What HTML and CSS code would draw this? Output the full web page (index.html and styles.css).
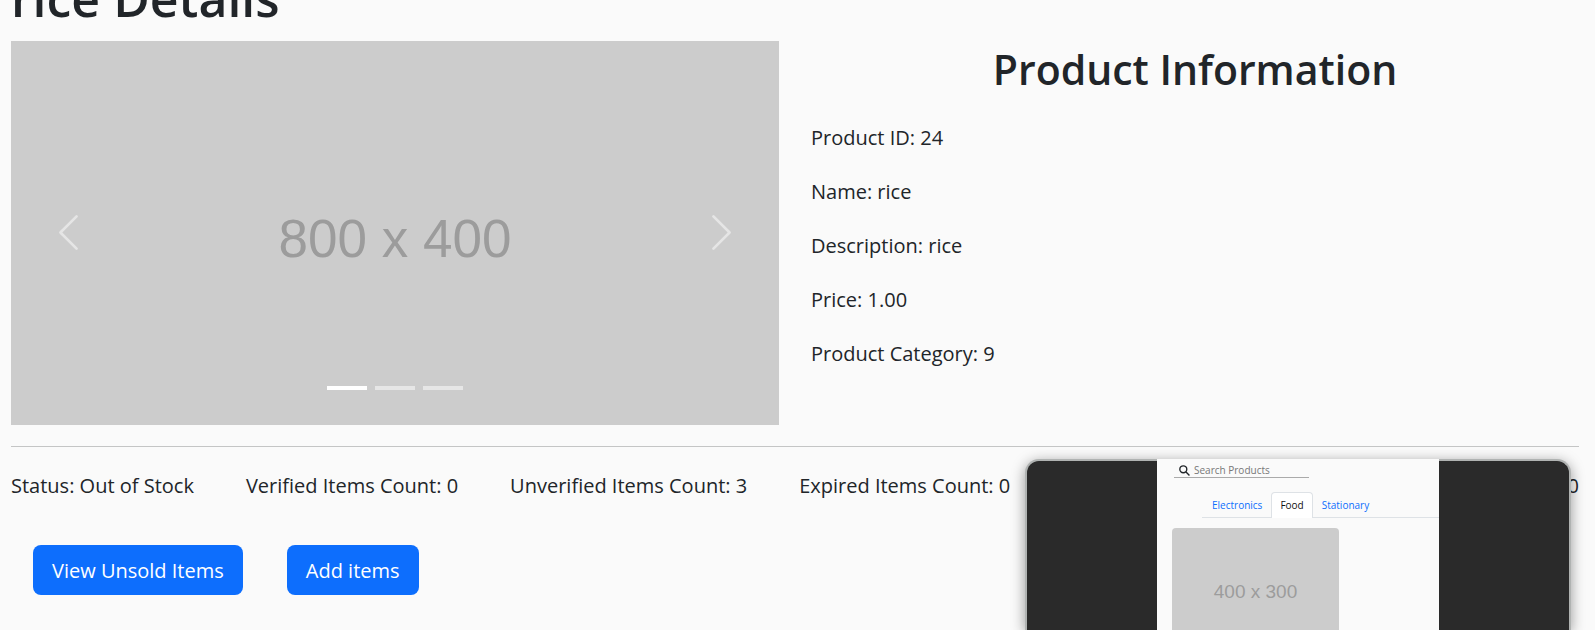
FILE: index.html
```html
<!DOCTYPE html>
<html lang="en">
<head>
<meta charset="utf-8">
<title>rice Details</title>
<link rel="stylesheet" href="styles.css">
</head>
<body>
<main class="page">
  <h1 class="page-title">rice Details</h1>
  <div class="product">
    <section class="carousel" aria-label="Product pictures">
      <span class="placeholder">800 x 400</span>
      <button class="control control-prev" type="button" aria-label="Previous">
        <svg class="chevron" viewBox="0 0 16 16"><path d="M11.354 1.646a.5.5 0 0 1 0 .708L5.707 8l5.647 5.646a.5.5 0 0 1-.708.708l-6-6a.5.5 0 0 1 0-.708l6-6a.5.5 0 0 1 .708 0z"/></svg>
      </button>
      <button class="control control-next" type="button" aria-label="Next">
        <svg class="chevron" viewBox="0 0 16 16"><path d="M4.646 1.646a.5.5 0 0 1 .708 0l6 6a.5.5 0 0 1 0 .708l-6 6a.5.5 0 0 1-.708-.708L10.293 8 4.646 2.354a.5.5 0 0 1 0-.708z"/></svg>
      </button>
      <div class="indicators">
        <button class="indicator active" type="button" aria-label="Slide 1"></button>
        <button class="indicator" type="button" aria-label="Slide 2"></button>
        <button class="indicator" type="button" aria-label="Slide 3"></button>
      </div>
    </section>
    <section class="info">
      <h2 class="info-title">Product Information</h2>
      <p class="info-line">Product ID: 24</p>
      <p class="info-line">Name: rice</p>
      <p class="info-line">Description: rice</p>
      <p class="info-line">Price: 1.00</p>
      <p class="info-line">Product Category: 9</p>
    </section>
  </div>
  <hr class="divider">
  <div class="counts">
    <span>Status: Out of Stock</span>
    <span>Verified Items Count: 0</span>
    <span>Unverified Items Count: 3</span>
    <span>Expired Items Count: 0</span>
    <span class="count-last">0</span>
  </div>
  <div class="actions">
    <button class="btn" type="button">View Unsold Items</button>
    <button class="btn" type="button">Add items</button>
  </div>
</main>
<aside class="preview">
  <div class="screen">
    <label class="search">
      <svg class="search-icon" viewBox="0 0 12 12"><circle cx="4.7" cy="4.7" r="3.8"/><path d="M7.4 7.4 11.4 11.4"/></svg>
      <input class="search-input" type="text" placeholder="Search Products" aria-label="Search Products">
    </label>
    <nav class="tabs">
      <a class="tab" href="#electronics">Electronics</a>
      <a class="tab tab-active" href="#food">Food</a>
      <a class="tab" href="#stationary">Stationary</a>
    </nav>
    <div class="thumb">400 x 300</div>
  </div>
</aside>
</body>
</html>
```

FILE: styles.css
```css
* { box-sizing: border-box; }

body {
  margin: 0;
  min-height: 100vh;
  position: relative;
  overflow: hidden;
  background: #fafafa;
  color: #212529;
  font-family: "Segoe UI", "Open Sans", sans-serif;
  font-size: 20px;
  line-height: 32px;
}

.page { padding: 0 16px 0 11px; }

/* The view is scrolled past the top of the title. */
.page-title {
  margin: -34px 0 11px;
  font-size: 50px;
  line-height: 64px;
  font-weight: 600;
}

.product {
  display: grid;
  grid-template-columns: 1fr 1fr;
  gap: 32px;
}

.carousel {
  position: relative;
  aspect-ratio: 2 / 1;
  display: flex;
  align-items: center;
  justify-content: center;
  background: #ccc;
}

.placeholder {
  padding-top: 12px;
  color: #9c9c9c;
  font-family: "Liberation Sans", Arial, sans-serif;
  font-size: 53px;
  line-height: 64px;
}

.control {
  position: absolute;
  top: 0;
  bottom: 2px;
  width: 15%;
  padding: 0;
  border: 0;
  background: none;
  display: flex;
  align-items: center;
  justify-content: center;
  opacity: .5;
}
.control-prev { left: 0; }
.control-next { right: 0; }
.chevron { width: 43px; height: 43px; fill: #fff; }

.indicators {
  position: absolute;
  inset: auto 0 35px;
  display: flex;
  justify-content: center;
  gap: 8px;
}
.indicator {
  width: 40px;
  height: 4px;
  padding: 0;
  border: 0;
  background: #fff;
  opacity: .5;
}
.indicator.active { opacity: 1; }

.info-title {
  margin: 0 0 27px;
  padding-top: 2px;
  text-align: center;
  font-size: 41px;
  line-height: 52px;
  font-weight: 600;
}
.info-line { margin: 0 0 22px; }

.divider {
  margin: 21px 0 23px;
  border: 0;
  border-top: 1px solid #c4c5c5;
}

.counts {
  display: flex;
  gap: 52px;
  white-space: nowrap;
}
.count-last { margin-left: auto; }

.actions {
  display: flex;
  gap: 44px;
  padding: 43px 22px 0;
}
.btn {
  padding: 10px 19px 8px;
  border: 0;
  border-radius: 8px;
  background: #0d6efd;
  color: #fff;
  font: inherit;
  line-height: 32px;
}

/* Floating preview, cut off by the bottom of the window. */
.preview {
  position: absolute;
  top: 459px;
  right: 24px;
  bottom: 0;
  width: 546px;
  padding: 0 130px;
  border: 2px solid #b0b3b2;
  border-bottom: 0;
  border-radius: 14px 14px 0 0;
  background: #2a2a2a;
  box-shadow: 0 3px 14px rgba(0, 0, 0, .4);
}
.screen {
  height: calc(100% + 2px);
  margin-top: -2px;
  padding: 4px 0 0 15px;
  overflow: hidden;
  background: #fafafa;
  font-size: 10px;
  line-height: 14px;
}
.search {
  display: flex;
  align-items: center;
  gap: 4px;
  width: 135px;
  height: 15px;
  margin-left: 2px;
  padding: 0 5px;
  border-bottom: 1px solid #aaa;
}
.search-icon {
  width: 11px;
  height: 11px;
  flex: none;
  fill: none;
  stroke: #212529;
  stroke-width: 1.5;
}
.search-input {
  width: 100%;
  min-width: 0;
  padding: 0;
  border: 0;
  background: none;
  font: inherit;
}
.search-input::placeholder { color: #777; opacity: 1; }
.tabs {
  display: flex;
  margin: 14px 0 10px 30px;
  padding-left: 1px;
  border-bottom: 1px solid #dee2e6;
}
.tab {
  margin-bottom: -1px;
  padding: 5px 8px 6px;
  border: 1px solid transparent;
  border-bottom: 0;
  border-radius: 4px 4px 0 0;
  color: #0d6efd;
  text-decoration: none;
}
.tab-active {
  border-color: #dee2e6;
  background: #fff;
  color: #111;
}
.thumb {
  width: 167px;
  aspect-ratio: 4 / 3;
  padding-top: 2px;
  display: flex;
  align-items: center;
  justify-content: center;
  border-radius: 4px;
  background: #ccc;
  color: #9c9c9c;
  font-family: "Liberation Sans", Arial, sans-serif;
  font-size: 19px;
}
```
